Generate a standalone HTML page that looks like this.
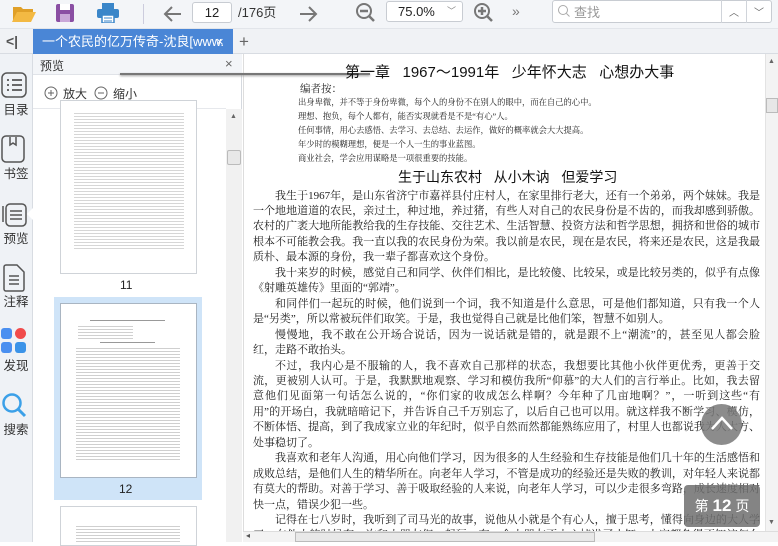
<!DOCTYPE html>
<html><head><meta charset="utf-8"><style>
*{margin:0;padding:0;box-sizing:border-box}
body{width:778px;height:542px;overflow:hidden;position:relative;background:#fff;font-family:"Liberation Sans","Noto Sans CJK SC",sans-serif;color:#333}
.abs{position:absolute}
#tb{left:0;top:0;width:778px;height:29px;background:#f3f5f8;border-bottom:1px solid #e2e5ea}
#tabs{left:0;top:29px;width:778px;height:25px;background:#f0f2f5;border-bottom:1px solid #d8dce2}
#tab{left:33px;top:29px;width:200px;height:25px;background:#4a86d6;color:#fff;font-size:13px;line-height:25px;padding-left:9px;white-space:nowrap;overflow:hidden}
#side{left:0;top:54px;width:33px;height:488px;background:#eff2f6;border-right:1px solid #d8dce2}
.sl{position:absolute;left:0;width:32px;text-align:center;font-size:12.5px;color:#333}
#prev{left:33px;top:54px;width:209px;height:488px;background:#fff;border-right:1px solid #d5d9df}
#doc{left:243px;top:54px;width:522px;height:477px;background:#fff;border-left:1px solid #ddd}
.ln{position:absolute;left:253px;width:507px;font-family:"Liberation Serif","Noto Serif CJK SC",serif;font-size:11px;color:#222;white-space:nowrap;text-align:justify;text-align-last:justify;height:15px;line-height:15px}
.s{text-align-last:left}
.i{padding-left:22px}
.n{position:absolute;left:298px;font-family:"Liberation Serif","Noto Serif CJK SC",serif;font-size:8.3px;color:#222;white-space:nowrap}
.th{position:absolute;background:#fff;border:1px solid #cfd3d8}
</style></head><body>
<div id="tb" class="abs"></div>
<svg class="abs" style="left:12px;top:3px" width="26" height="20"><path d="M1 4h8l2 2h10v3H6L1 18z" fill="#e0a028"/><path d="M5 9h19l-5 10H0z" fill="#f3b943"/></svg>
<svg class="abs" style="left:55px;top:3px" width="20" height="20"><rect x="1" y="1" width="18" height="18" rx="2" fill="#8a4fa3"/><rect x="5" y="1" width="10" height="6" fill="#fff"/><rect x="5" y="11" width="10" height="8" fill="#c9a8d8"/></svg>
<svg class="abs" style="left:97px;top:3px" width="22" height="20"><rect x="5" y="0" width="12" height="6" fill="#3a86c9"/><rect x="0" y="6" width="22" height="9" rx="2" fill="#3a86c9"/><rect x="5" y="12" width="12" height="8" fill="#fff" stroke="#3a86c9" stroke-width="1.5"/><line x1="7" y1="15" x2="15" y2="15" stroke="#3a86c9"/><line x1="7" y1="18" x2="15" y2="18" stroke="#3a86c9"/></svg>
<div class="abs" style="left:143px;top:4px;width:1px;height:20px;background:#ccd"></div>
<svg class="abs" style="left:163px;top:4px" width="20" height="20"><path d="M18 10H3M9 3L2 10l7 7" stroke="#777" stroke-width="2" fill="none"/></svg>
<div class="abs" style="left:192px;top:2px;width:40px;height:21px;background:#fff;border:1px solid #c8ccd2;border-radius:3px;font-size:13px;text-align:center;line-height:19px;color:#222">12</div>
<div class="abs" style="left:238px;top:3px;font-size:13px;line-height:19px;color:#333">/176页</div>
<svg class="abs" style="left:298px;top:4px" width="20" height="20"><path d="M2 10h15M11 3l7 7-7 7" stroke="#777" stroke-width="2" fill="none"/></svg>
<svg class="abs" style="left:355px;top:2px" width="22" height="22"><circle cx="9" cy="9" r="7" stroke="#777" stroke-width="2" fill="none"/><path d="M5 9h8M14 14l5 5" stroke="#777" stroke-width="2.5"/></svg>
<div class="abs" style="left:386px;top:1px;width:77px;height:21px;background:#fff;border:1px solid #c8ccd2;border-radius:3px;font-size:13px;line-height:19px;padding-left:11px;color:#222">75.0%<span style="position:absolute;left:60px;top:0;font-size:9px;color:#888">﹀</span></div>
<svg class="abs" style="left:473px;top:2px" width="22" height="22"><circle cx="9" cy="9" r="7" stroke="#777" stroke-width="2" fill="none"/><path d="M5 9h8M9 5v8M14 14l5 5" stroke="#777" stroke-width="2.5"/></svg>
<div class="abs" style="left:512px;top:3px;font-size:14px;color:#777">»</div>
<div class="abs" style="left:552px;top:0;width:220px;height:23px;background:#fff;border:1px solid #c8ccd2;border-radius:3px"></div>
<svg class="abs" style="left:557px;top:4px" width="14" height="14"><circle cx="6" cy="6" r="4.5" stroke="#aaa" fill="none"/><path d="M9.5 9.5l3 3" stroke="#aaa"/></svg>
<div class="abs" style="left:574px;top:2px;font-size:13px;color:#999">查找</div>
<div class="abs" style="left:721px;top:0;width:1px;height:23px;background:#d0d4da"></div>
<div class="abs" style="left:746px;top:0;width:1px;height:23px;background:#d0d4da"></div>
<div class="abs" style="left:729px;top:4px;font-size:10px;color:#666">︿</div>
<div class="abs" style="left:754px;top:4px;font-size:10px;color:#666">﹀</div>

<div id="tabs" class="abs"></div>
<div class="abs" style="left:6px;top:33px;font-size:14px;color:#555;font-weight:bold">&lt;|</div>
<div id="tab" class="abs">一个农民的亿万传奇-沈良[www.<span style="position:absolute;left:183px;top:0">×</span></div>
<div class="abs" style="left:239px;top:29px;font-size:17px;color:#666;line-height:25px">+</div>

<div id="side" class="abs"></div>
<svg class="abs" style="left:1px;top:72px" width="26" height="26"><rect x="1" y="1" width="24" height="24" rx="5" stroke="#555" stroke-width="1.5" fill="none"/><path d="M6 8h2M11 8h10M6 13h2M11 13h10M6 18h2M11 18h10" stroke="#555" stroke-width="1.8"/></svg>
<div class="sl" style="top:99px">目录</div>
<svg class="abs" style="left:1px;top:135px" width="24" height="28"><rect x="1" y="1" width="22" height="26" rx="4" stroke="#555" stroke-width="1.5" fill="none"/><path d="M9 2v8l3-2 3 2V2" stroke="#555" stroke-width="1.5" fill="none"/></svg>
<div class="sl" style="top:163px">书签</div>
<svg class="abs" style="left:1px;top:200px" width="26" height="28"><rect x="5" y="4" width="20" height="22" rx="4" stroke="#555" stroke-width="1.5" fill="#eff2f6"/><path d="M2 6v16M9 11h12M9 15h12M9 19h12" stroke="#555" stroke-width="1.5"/></svg>
<div class="abs" style="left:27px;top:208px;width:0;height:0;border-top:6px solid transparent;border-bottom:6px solid transparent;border-right:6px solid #fff"></div>
<div class="sl" style="top:228px">预览</div>
<svg class="abs" style="left:2px;top:264px" width="24" height="28"><path d="M2 3a2 2 0 012-2h11l7 7v17a2 2 0 01-2 2H4a2 2 0 01-2-2z" stroke="#555" stroke-width="1.5" fill="none"/><path d="M7 12h10M7 16h10M7 20h10" stroke="#555" stroke-width="1.5"/></svg>
<div class="sl" style="top:291px">注释</div>
<svg class="abs" style="left:1px;top:328px" width="26" height="26"><rect x="0" y="0" width="11" height="11" rx="3" fill="#4a8ff0"/><circle cx="19.5" cy="5.5" r="5.5" fill="#f04b4b"/><rect x="0" y="14" width="11" height="11" rx="3" fill="#4a8ff0"/><rect x="14" y="14" width="11" height="11" rx="3" fill="#3b93e8"/></svg>
<div class="sl" style="top:355px">发现</div>
<svg class="abs" style="left:1px;top:392px" width="26" height="26"><circle cx="11" cy="11" r="8.5" stroke="#3ba0e8" stroke-width="2.5" fill="none"/><path d="M17 17l7 7" stroke="#3ba0e8" stroke-width="3"/></svg>
<div class="sl" style="top:419px">搜索</div>

<div id="prev" class="abs"></div>
<div class="abs" style="left:33px;top:54px;width:209px;height:21px;background:#f3f5f8;border-bottom:1px solid #e0e3e8"></div>
<div class="abs" style="left:40px;top:57px;font-size:12px;color:#333">预览</div>
<div class="abs" style="left:225px;top:56px;font-size:13px;color:#666">×</div>
<svg class="abs" style="left:44px;top:86px" width="14" height="14"><circle cx="7" cy="7" r="6" stroke="#666" fill="none"/><path d="M4 7h6M7 4v6" stroke="#666"/></svg>
<div class="abs" style="left:63px;top:85px;font-size:12px;color:#333">放大</div>
<svg class="abs" style="left:94px;top:86px" width="14" height="14"><circle cx="7" cy="7" r="6" stroke="#666" fill="none"/><path d="M4 7h6" stroke="#666"/></svg>
<div class="abs" style="left:113px;top:85px;font-size:12px;color:#333">缩小</div>
<div class="abs" style="left:33px;top:108px;width:193px;height:1px;background:#e6e8ec"></div>
<div class="th" style="left:60px;top:100px;width:137px;height:174px"></div>
<div class="abs" style="left:74px;top:111px;width:110px;height:140px;background:repeating-linear-gradient(#fff 0,#fff 2px,#d6d6d6 2px,#d6d6d6 3px)"></div>
<div class="abs" style="left:120px;top:278px;font-size:12px;color:#222">11</div>
<div class="abs" style="left:54px;top:297px;width:148px;height:203px;background:#cfe4f8"></div>
<div class="th" style="left:60px;top:303px;width:137px;height:175px;border-color:#a9b5c2"></div>
<div class="abs" style="left:90px;top:320px;width:75px;height:1px;background:#999"></div>
<div class="abs" style="left:78px;top:324px;width:55px;height:15px;background:repeating-linear-gradient(#fff 0,#fff 2px,#d0d0d0 2px,#d0d0d0 3px)"></div>
<div class="abs" style="left:100px;top:342px;width:55px;height:1px;background:#999"></div>
<div class="abs" style="left:76px;top:346px;width:104px;height:114px;background:repeating-linear-gradient(#fff 0,#fff 2px,#cfcfcf 2px,#cfcfcf 3px)"></div>
<div class="abs" style="left:119px;top:482px;font-size:12px;color:#222">12</div>
<div class="th" style="left:60px;top:506px;width:137px;height:40px"></div>
<div class="abs" style="left:76px;top:524px;width:104px;height:18px;background:repeating-linear-gradient(#fff 0,#fff 2px,#cfcfcf 2px,#cfcfcf 3px)"></div>
<div class="abs" style="left:226px;top:109px;width:16px;height:433px;background:#f1f1f1"></div>
<div class="abs" style="left:230px;top:113px;font-size:7px;color:#666">▲</div>
<div class="abs" style="left:227px;top:150px;width:14px;height:15px;background:#e8e8e8;border:1px solid #bbb;border-radius:2px"></div>

<div id="doc" class="abs"></div>
<div class="abs" style="left:765px;top:54px;width:13px;height:477px;background:#f3f3f3;border-left:1px solid #e3e3e3"></div>
<div class="abs" style="left:768px;top:58px;font-size:7px;color:#666">▲</div>
<div class="abs" style="left:766px;top:98px;width:12px;height:15px;background:#e7e7e7;border:1px solid #bbb"></div>
<div class="abs" style="left:768px;top:519px;font-size:7px;color:#666">▼</div>

<div class="abs" style="left:120px;top:73px;width:250px;height:2px;background:#777;box-shadow:0 1px 2px #999"></div>
<div class="abs" style="left:345px;top:61px;font-size:15px;color:#111;white-space:nowrap">第一章&nbsp;&nbsp;&nbsp;1967～1991年&nbsp;&nbsp;&nbsp;少年怀大志&nbsp;&nbsp;&nbsp;心想办大事</div>
<div class="n" style="left:300px;top:81px;font-size:10.5px">编者按：</div>
<div class="n" style="top:96px">出身卑微，并不等于身份卑微，每个人的身份不在别人的眼中，而在自己的心中。</div>
<div class="n" style="top:110px">理想、抱负，每个人都有，能否实现就看是不是“有心”人。</div>
<div class="n" style="top:124px">任何事情，用心去感悟、去学习、去总结、去运作，做好的概率就会大大提高。</div>
<div class="n" style="top:138px">年少时的模糊理想，便是一个人一生的事业蓝图。</div>
<div class="n" style="top:152px">商业社会，学会应用谋略是一项很重要的技能。</div>
<div class="abs" style="left:398px;top:167px;font-size:14px;color:#111;white-space:nowrap">生于山东农村&nbsp;&nbsp;&nbsp;从小木讷&nbsp;&nbsp;&nbsp;但爱学习</div>

<div class="ln i" style="top:188.5px">我生于1967年，是山东省济宁市嘉祥县付庄村人，在家里排行老大，还有一个弟弟，两个妹妹。我是</div>
<div class="ln" style="top:204px">一个地地道道的农民，亲过土，种过地，养过猪，有些人对自己的农民身份是不齿的，而我却感到骄傲。</div>
<div class="ln" style="top:219.4px">农村的广袤大地所能教给我的生存技能、交往艺术、生活智慧、投资方法和哲学思想，拥挤和世俗的城市</div>
<div class="ln" style="top:234.9px">根本不可能教会我。我一直以我的农民身份为荣。我以前是农民，现在是农民，将来还是农民，这是我最</div>
<div class="ln s" style="top:250.3px">质朴、最本源的身份，我一辈子都喜欢这个身份。</div>
<div class="ln i" style="top:265.8px">我十来岁的时候，感觉自己和同学、伙伴们相比，是比较傻、比较呆，或是比较另类的，似乎有点像</div>
<div class="ln s" style="top:281.2px">《射雕英雄传》里面的“郭靖”。</div>
<div class="ln i" style="top:296.7px">和同伴们一起玩的时候，他们说到一个词，我不知道是什么意思，可是他们都知道，只有我一个人</div>
<div class="ln s" style="top:312.1px">是“另类”，所以常被玩伴们取笑。于是，我也觉得自己就是比他们笨，智慧不如别人。</div>
<div class="ln i" style="top:327.6px">慢慢地，我不敢在公开场合说话，因为一说话就是错的，就是跟不上“潮流”的，甚至见人都会脸</div>
<div class="ln s" style="top:343px">红，走路不敢抬头。</div>
<div class="ln i" style="top:358.5px">不过，我内心是不服输的人，我不喜欢自己那样的状态，我想要比其他小伙伴更优秀，更善于交</div>
<div class="ln" style="top:373.9px">流，更被别人认可。于是，我默默地观察、学习和模仿我所“仰慕”的大人们的言行举止。比如，我去留</div>
<div class="ln" style="top:389.4px">意他们见面第一句话怎么说的，“你们家的收成怎么样啊？今年种了几亩地啊？”，一听到这些“有</div>
<div class="ln" style="top:404.8px">用”的开场白，我就暗暗记下，并告诉自己千万别忘了，以后自己也可以用。就这样我不断学习、模仿，</div>
<div class="ln" style="top:420.3px">不断体悟、提高，到了我成家立业的年纪时，似乎自然而然都能熟练应用了，村里人也都说我为人大方、</div>
<div class="ln s" style="top:435.7px">处事稳切了。</div>
<div class="ln i" style="top:451.2px">我喜欢和老年人沟通，用心向他们学习，因为很多的人生经验和生存技能是他们几十年的生活感悟和</div>
<div class="ln" style="top:466.6px">成败总结，是他们人生的精华所在。向老年人学习，不管是成功的经验还是失败的教训，对年轻人来说都</div>
<div class="ln" style="top:482.1px">有莫大的帮助。对善于学习、善于吸取经验的人来说，向老年人学习，可以少走很多弯路，成长速度相对</div>
<div class="ln s" style="top:497.5px">快一点，错误少犯一些。</div>
<div class="ln i" style="top:513px">记得在七八岁时，我听到了司马光的故事，说他从小就是个有心人，擅于思考，懂得向身边的大人学</div>
<div class="ln" style="top:528.4px">习。在他小的时候有一次和小朋友们一起玩，有一个小朋友不小心掉进了水缸，大家都急得不知该怎么</div>
<div class="abs" style="left:243px;top:531px;width:535px;height:11px;background:#f3f3f3;border-top:1px solid #ddd"></div>
<div class="abs" style="left:295px;top:532px;width:300px;height:10px;background:#e8e8e8;border:1px solid #bbb"></div>
<div class="abs" style="left:246px;top:531px;font-size:8px;color:#555">◂</div>

<div class="abs" style="left:701px;top:404px;width:41px;height:41px;border-radius:50%;background:rgba(120,120,120,.85)"></div>
<svg class="abs" style="left:709px;top:414px" width="26" height="18"><path d="M3 15L13 4l10 11" stroke="#fff" stroke-width="2.5" fill="none"/></svg>
<div class="abs" style="left:684px;top:485px;width:76px;height:42px;border-radius:4px;background:rgba(110,110,110,.85);color:#fff;font-size:14px;line-height:42px;text-align:center;white-space:nowrap">第 <b style="font-size:17px">12</b> 页</div>
</body></html>
